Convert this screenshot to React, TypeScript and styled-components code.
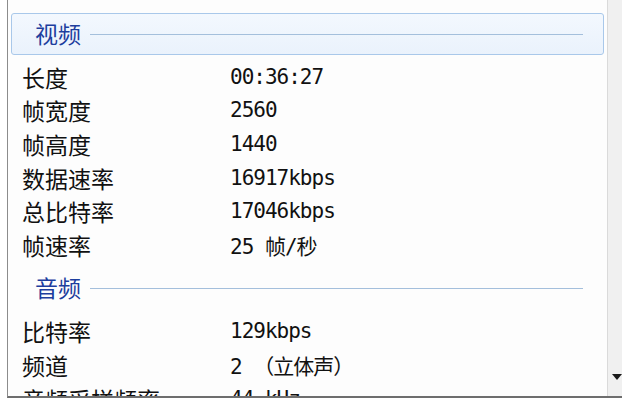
import styled, { createGlobalStyle } from 'styled-components';

const GlobalStyle = createGlobalStyle`
  html, body {
    margin: 0;
    padding: 0;
    background: #ffffff;
  }
  body {
    font-family: "Noto Sans CJK SC", "DejaVu Sans", sans-serif;
  }
`;

interface Field {
  label: string;
  value: string;
}

interface Section {
  title: string;
  selected?: boolean;
  fields: Field[];
}

const sections: Section[] = [
  {
    title: '视频',
    selected: true,
    fields: [
      { label: '长度', value: '00:36:27' },
      { label: '帧宽度', value: '2560' },
      { label: '帧高度', value: '1440' },
      { label: '数据速率', value: '16917kbps' },
      { label: '总比特率', value: '17046kbps' },
      { label: '帧速率', value: '25 帧/秒' },
    ],
  },
  {
    title: '音频',
    fields: [
      { label: '比特率', value: '129kbps' },
      { label: '频道', value: '2 （立体声）' },
      { label: '音频采样频率', value: '44 kHz' },
    ],
  },
];

const App = () => {
  return (
    <>
      <GlobalStyle />
      <Frame>
        <Window>
          <List>
            {sections.map((section) => (
              <Group key={section.title}>
                <GroupHeader $selected={section.selected}>
                  <GroupTitle>{section.title}</GroupTitle>
                  <GroupRule />
                </GroupHeader>
                {section.fields.map((field) => (
                  <Row key={field.label}>
                    <Label>{field.label}</Label>
                    <Value>{field.value}</Value>
                  </Row>
                ))}
              </Group>
            ))}
          </List>
          <Scrollbar>
            <svg width="10" height="6" viewBox="0 0 10 6">
              <path d="M0 0 L10 0 L5 6 Z" fill="#1a1a1a" />
            </svg>
          </Scrollbar>
        </Window>
      </Frame>
    </>
  );
};

export default App;

const Frame = styled.div`
  width: 622px;
  height: 404px;
  overflow: hidden;
  background: #ffffff;
`

const Window = styled.div`
  display: flex;
  height: 396px;
  width: 614px;
  margin-left: 7px;
  border-left: 1px solid #8c8c8c;
  border-bottom: 2px solid #6e6e6e;
  background: #fdfdfd;
  overflow: hidden;
`

const List = styled.div`
  flex: 1;
  display: flex;
  flex-direction: column;
  gap: 6px;
  padding-top: 13px;
  overflow: hidden;
`

const Group = styled.div`
  display: flex;
  flex-direction: column;
`

const GroupHeader = styled.div<{ $selected?: boolean }>`
  display: flex;
  align-items: center;
  height: 42px;
  box-sizing: border-box;
  margin: 0 3px 5px 3px;
  padding: 0 20px 0 23px;
  border: 1px solid ${(p) => (p.$selected ? '#a9c8ea' : 'transparent')};
  border-radius: 3px;
  background: ${(p) => (p.$selected ? 'linear-gradient(#f3f8fe, #eaf2fc)' : 'transparent')};
`

const GroupTitle = styled.span`
  font-size: 23px;
  line-height: 1;
  color: #1d3e9e;
  margin-right: 9px;
  margin-top: -2px;
`

const GroupRule = styled.div`
  flex: 1;
  height: 1px;
  background: #a4bfdc;
`

const Row = styled.div`
  display: flex;
  align-items: center;
  height: 33.6px;
  padding-left: 14px;
`

const Label = styled.span`
  width: 208px;
  font-size: 23px;
  color: #111111;
  white-space: nowrap;
`

const Value = styled.span`
  font-family: "DejaVu Sans Mono", "Noto Sans CJK SC", monospace;
  font-size: 21px;
  letter-spacing: -1px;
  color: #111111;
  white-space: nowrap;
`

const Scrollbar = styled.div`
  width: 14px;
  flex-shrink: 0;
  display: flex;
  flex-direction: column;
  justify-content: flex-end;
  align-items: flex-end;
  padding-bottom: 16px;
  border-left: 1px solid #dadada;
  background: #f0f0f0;
`
